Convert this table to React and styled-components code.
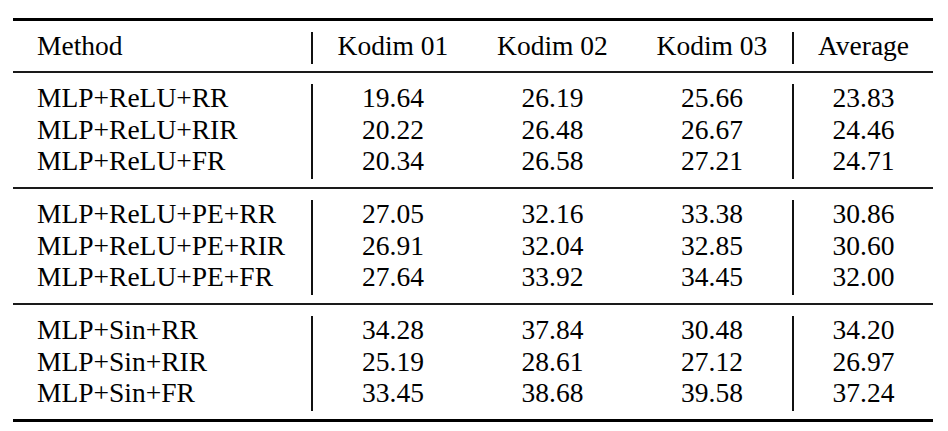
import React from 'react';
import styled, { createGlobalStyle } from 'styled-components';

const GlobalStyle = createGlobalStyle`
  html, body {
    margin: 0;
    padding: 0;
    background: #fff;
  }
  body {
    font-family: Tinos, 'Liberation Serif', 'Times New Roman', serif;
    color: #000;
  }
`;

const Page = styled.div`
  width: 948px;
  height: 431px;
  padding-top: 18px;
  box-sizing: border-box;
`;

const Table = styled.div`
  margin-left: 13px;
  width: 920px;
`;

const Rule = styled.div`
  height: ${(p) => (p.$thick ? '3px' : '2px')};
  background: ${(p) => (p.$thick ? '#000' : '#1a1a1a')};
`;

const Group = styled.div`
  display: grid;
  grid-template-columns: 300px 160px 159px 160px 141px;
  grid-auto-rows: ${(p) => (p.$header ? '32px' : '31.67px')};
  padding: 11px 0 ${(p) => (p.$header ? '7px' : '8px')};
`;

const Cell = styled.div`
  box-sizing: border-box;
  font-family: Tinos, 'Liberation Serif', 'Times New Roman', serif;
  font-size: 27.5px;
  line-height: 27.67px;
  padding-bottom: 4px;
  display: flex;
  align-items: flex-end;
  justify-content: ${(p) => (p.$left ? 'flex-start' : 'center')};
  padding-left: ${(p) => (p.$left ? '24px' : '0')};
  border-right: ${(p) => (p.$sepRight ? '2px solid #111' : 'none')};
  border-left: ${(p) => (p.$sepLeft ? '2px solid #111' : 'none')};
  white-space: nowrap;
`;

const header = ['Method', 'Kodim 01', 'Kodim 02', 'Kodim 03', 'Average'];

const groups = [
  [
    ['MLP+ReLU+RR', '19.64', '26.19', '25.66', '23.83'],
    ['MLP+ReLU+RIR', '20.22', '26.48', '26.67', '24.46'],
    ['MLP+ReLU+FR', '20.34', '26.58', '27.21', '24.71'],
  ],
  [
    ['MLP+ReLU+PE+RR', '27.05', '32.16', '33.38', '30.86'],
    ['MLP+ReLU+PE+RIR', '26.91', '32.04', '32.85', '30.60'],
    ['MLP+ReLU+PE+FR', '27.64', '33.92', '34.45', '32.00'],
  ],
  [
    ['MLP+Sin+RR', '34.28', '37.84', '30.48', '34.20'],
    ['MLP+Sin+RIR', '25.19', '28.61', '27.12', '26.97'],
    ['MLP+Sin+FR', '33.45', '38.68', '39.58', '37.24'],
  ],
];

const Row = ({ values }) =>
  values.map((v, i) => (
    <Cell key={i} $left={i === 0} $sepRight={i === 0} $sepLeft={i === 4}>
      {v}
    </Cell>
  ));

const App = () => (
  <>
    <GlobalStyle />
    <Page>
      <Table>
        <Rule $thick />
        <Group $header>
          <Row values={header} />
        </Group>
        {groups.map((rows, g) => (
          <React.Fragment key={g}>
            <Rule />
            <Group>
              {rows.map((r, i) => (
                <Row key={i} values={r} />
              ))}
            </Group>
          </React.Fragment>
        ))}
        <Rule $thick />
      </Table>
    </Page>
  </>
);

export default App;
